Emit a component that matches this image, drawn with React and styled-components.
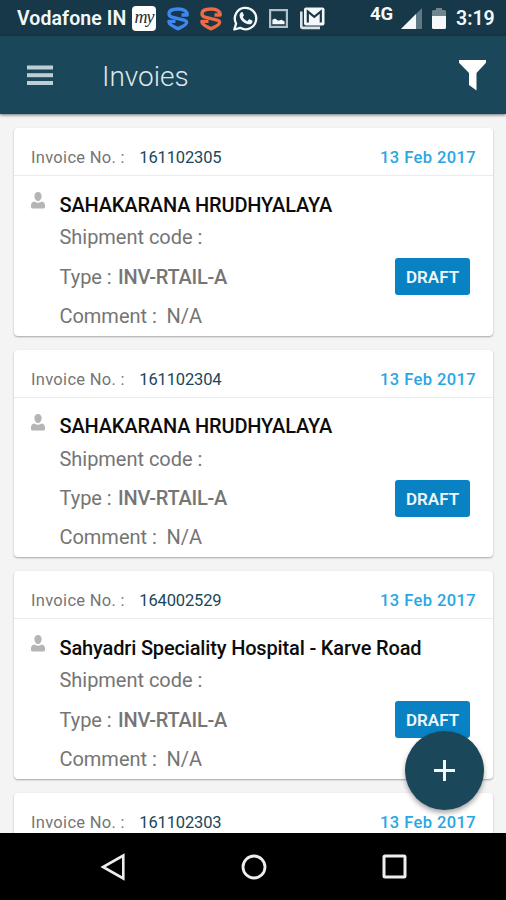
import React from 'react'
import styled, { createGlobalStyle } from 'styled-components'

const GlobalStyle = createGlobalStyle`
  * {
    box-sizing: border-box;
  }
  body {
    margin: 0;
    font-family: Roboto, "Liberation Sans", sans-serif;
  }
  svg {
    display: block;
    flex: none;
  }
`

const Screen = styled.div`
  position: relative;
  width: 506px;
  height: 900px;
  display: flex;
  flex-direction: column;
  overflow: hidden;
  background-color: #f4f4f4;
`

const StatusBar = styled.div`
  flex: none;
  height: 36px;
  display: flex;
  align-items: center;
  justify-content: space-between;
  padding: 0 11px 0 17px;
  background-color: #163848;
  color: #f4f8fa;
  white-space: nowrap;
`
const StatusGroup = styled.div`
  display: flex;
  align-items: center;
  gap: ${({ $gap }) => $gap};
`
const Carrier = styled.span`
  width: 110px;
  margin-right: -6px;
  font-size: 19.5px;
  line-height: 24px;
  font-weight: 600;
  letter-spacing: 0.1px;
  padding-top: 2px;
`
const MyBadge = styled.span`
  width: 24px;
  height: 25px;
  border-radius: 4px;
  background-color: white;
  color: #1c2b33;
  font-family: "Liberation Serif", serif;
  font-size: 18px;
  font-style: italic;
  line-height: 22px;
  letter-spacing: -1px;
  text-align: center;
`
const Network = styled.span`
  width: 24px;
  margin-right: -3px;
  padding-bottom: 8px;
  font-size: 18.5px;
  line-height: 20px;
  font-weight: 700;
`
const Clock = styled.span`
  width: 39px;
  padding-top: 2px;
  font-size: 19.5px;
  line-height: 24px;
  font-weight: 600;
`

const Toolbar = styled.header`
  position: relative;
  flex: none;
  height: 78px;
  display: flex;
  align-items: center;
  padding: 0 20px 0 27px;
  background-color: #1a4759;
  box-shadow: 0 1px 3px rgba(0, 0, 0, 0.55);
  color: #dfe7eb;
`
const Title = styled.h1`
  flex: 1;
  margin: 4px 0 0 49px;
  font-size: 28px;
  line-height: 34px;
  font-weight: 300;
`

const List = styled.main`
  flex: 1;
  min-height: 0;
  overflow: hidden;
  display: flex;
  flex-direction: column;
  gap: 14px;
  padding: 14px 13px 0 14px;
`
const Card = styled.article`
  flex: none;
  height: 207.5px;
  border-radius: 4px;
  background-color: white;
  box-shadow: 0 1px 2px rgba(0, 0, 0, 0.32);
  color: #757575;
`
const CardHeader = styled.div`
  height: 48px;
  display: flex;
  align-items: center;
  padding: 13.5px 17px 0;
  border-bottom: 1px solid #ebebeb;
  font-size: 16.5px;
  line-height: 20px;
`
const InvoiceLabel = styled.span`
  width: 108.3px;
  letter-spacing: 0.3px;
`
const InvoiceNo = styled.span`
  flex: 1;
  color: #1a4759;
  letter-spacing: -0.15px;
`
const InvoiceDate = styled.span`
  color: #29a6e3;
  font-weight: 500;
  letter-spacing: 0.4px;
`
const CardBody = styled.div`
  display: flex;
  padding: 16px 23px 0 17px;
`
const Details = styled.div`
  flex: 1;
  margin-left: 14.5px;
  padding-top: 0.7px;
`
const Customer = styled.h2`
  height: 25px;
  margin: 0;
  color: #0c0c0c;
  font-size: 20px;
  line-height: 25px;
  font-weight: 500;
  letter-spacing: -0.16px;
  white-space: nowrap;
`
const Line = styled.div`
  height: 39.3px;
  display: flex;
  align-items: center;
  justify-content: space-between;
  font-size: 20px;
  line-height: 24px;
  letter-spacing: -0.03px;
  white-space: pre;
`
const Strong = styled.b`
  margin-left: 1.5px;
  font-weight: 500;
  letter-spacing: -0.25px;
`
const DraftButton = styled.button`
  width: 75px;
  height: 37px;
  padding: 1px 0 0;
  border: none;
  border-radius: 3px;
  background-color: #0882c3;
  color: #eef7fc;
  font-family: inherit;
  font-size: 17px;
  font-weight: 600;
`

const Fab = styled.button`
  position: absolute;
  right: 22px;
  bottom: 90px;
  width: 79px;
  height: 79px;
  padding: 0;
  display: flex;
  align-items: center;
  justify-content: center;
  border: none;
  border-radius: 50%;
  background-color: #1a4759;
  box-shadow: 0 3px 5px rgba(0, 0, 0, 0.35);
`

const NavBar = styled.nav`
  flex: none;
  height: 67px;
  display: flex;
  align-items: center;
  justify-content: space-between;
  padding: 0 99px 0 100px;
  background-color: black;
`

const ShieldS = ({ color }) => (
  <svg width="22" height="25" viewBox="0 0 22 25" fill="none" stroke={color} strokeWidth="3.4" strokeLinejoin="round">
    <path d="M14.5 9H20.2C20 4.6 16 3 11 3C6 3 2 4.6 2 7.6C2 9.6 3 10.7 5 11.2L17 14.2C20 15 20.4 16.4 18.6 18.4C16.6 20.4 13.8 21.4 11 22.8C8.2 21.4 5.4 20.4 3.4 18.4C2.4 17.4 2 16.6 1.9 15.4H8.5" />
  </svg>
)

const WhatsApp = () => (
  <svg width="25" height="25" viewBox="0 0 25 25">
    <path d="M1.3 23.5L3.1 17.6A10.7 10.7 0 1 1 7.2 21.8Z" fill="none" stroke="#f4f8fa" strokeWidth="2.3" strokeLinejoin="round" />
    <path
      d="M8.1 6.4C8.6 5.9 9.5 6 9.8 6.6L10.8 9C11 9.5 10.8 9.9 9.8 11C10.9 13.1 12.3 14.3 14.4 15.2L15.8 13.6C16.1 13.2 16.5 13.2 16.9 13.4L19.2 14.6C19.7 14.9 19.5 17 18.4 17.8C15.6 19.8 7.1 15.8 6.6 9.7C6.5 8.2 7.3 7 8.1 6.4Z"
      fill="#f4f8fa"
    />
  </svg>
)

const Picture = () => (
  <svg width="19" height="19" viewBox="0 0 19 19">
    <rect x="1.1" y="1.1" width="16.8" height="16.8" fill="none" stroke="#b4c0c6" strokeWidth="2.2" />
    <path d="M3.4 15.2V10.8L6 9.6L9.2 11.8L12.5 10.8L15.6 12.5V15.2Z" fill="#f4f8fa" />
  </svg>
)

const Gmail = () => (
  <svg width="26" height="23" viewBox="0 0 26 23">
    <path d="M2.3 4.5V19.5Q2.3 20.9 3.8 20.9H21" fill="none" stroke="#dbe3e6" strokeWidth="2.6" />
    <rect x="5" y="0.5" width="20.5" height="18" rx="2" fill="#f4f8fa" />
    <path d="M8.8 15.5V4.5L15.3 9.8L21.8 4.5V15.5" fill="none" stroke="#163848" strokeWidth="2.2" />
  </svg>
)

const Signal = () => (
  <svg width="21" height="21" viewBox="0 0 21 21">
    <path d="M21 0V21H0Z" fill="#607985" />
    <path d="M15 6V21H0Z" fill="#f4f8fa" />
  </svg>
)

const Battery = () => (
  <svg width="14" height="21" viewBox="0 0 14 21">
    <path d="M4 0H10V2H12.5Q14 2 14 3.5V8H0V3.5Q0 2 1.5 2H4Z" fill="#71858f" />
    <path d="M0 8H14V19.5Q14 21 12.5 21H1.5Q0 21 0 19.5Z" fill="#f4f8fa" />
  </svg>
)

const Menu = () => (
  <svg width="26" height="21" viewBox="0 0 26 21" fill="#bfcdd4">
    <rect y="0.5" width="26" height="4" />
    <rect y="8.2" width="26" height="4" />
    <rect y="16" width="26" height="4" />
  </svg>
)

const Filter = () => (
  <svg width="27" height="31" viewBox="0 0 27 31">
    <path d="M0 0H27V2.8L17.5 13V30.5L10 25V13L0 2.8Z" fill="white" />
  </svg>
)

const Person = () => (
  <svg width="14" height="17" viewBox="0 0 14 17" fill="#b5b5b5">
    <path d="M7 0C9.4 0 10.6 1.8 10.6 4.2C10.6 6.7 9 9 7 9C5 9 3.4 6.7 3.4 4.2C3.4 1.8 4.6 0 7 0Z" />
    <path d="M3.5 9.4Q7 12 10.5 9.4C13 9.8 14 11.3 14 13.5V15Q14 16.5 12.5 16.5H1.5Q0 16.5 0 15V13.5C0 11.3 1 9.8 3.5 9.4Z" />
  </svg>
)

const invoices = [
  { no: '161102305', customer: 'SAHAKARANA HRUDHYALAYA' },
  { no: '161102304', customer: 'SAHAKARANA HRUDHYALAYA' },
  { no: '164002529', customer: 'Sahyadri Speciality Hospital - Karve Road' },
  { no: '161102303' },
]

const Invoice = ({ no, customer }) => (
  <Card>
    <CardHeader>
      <InvoiceLabel>Invoice No. :</InvoiceLabel>
      <InvoiceNo>{no}</InvoiceNo>
      <InvoiceDate>13 Feb 2017</InvoiceDate>
    </CardHeader>
    {customer && (
      <CardBody>
        <Person />
        <Details>
          <Customer>{customer}</Customer>
          <Line>Shipment code :</Line>
          <Line>
            <span>Type : <Strong>INV-RTAIL-A</Strong></span>
            <DraftButton>DRAFT</DraftButton>
          </Line>
          <Line>{'Comment :  N/A'}</Line>
        </Details>
      </CardBody>
    )}
  </Card>
)

const App = () => {
  return (
    <Screen>
      <GlobalStyle />
      <StatusBar>
        <StatusGroup $gap="11px">
          <Carrier>Vodafone IN</Carrier>
          <MyBadge>my</MyBadge>
          <ShieldS color="#3f86ee" />
          <ShieldS color="#ee6b43" />
          <WhatsApp />
          <Picture />
          <Gmail />
        </StatusGroup>
        <StatusGroup $gap="10px">
          <Network>4G</Network>
          <Signal />
          <Battery />
          <Clock>3:19</Clock>
        </StatusGroup>
      </StatusBar>
      <Toolbar>
        <Menu />
        <Title>Invoies</Title>
        <Filter />
      </Toolbar>
      <List>
        {invoices.map((invoice) => (
          <Invoice key={invoice.no} {...invoice} />
        ))}
      </List>
      <NavBar>
        <svg width="25" height="28" viewBox="0 0 25 28">
          <path d="M23.3 2.5V25.5L3 14Z" fill="none" stroke="#eee" strokeWidth="2.6" />
        </svg>
        <svg width="26" height="26" viewBox="0 0 26 26">
          <circle cx="13" cy="13" r="11" fill="none" stroke="#eee" strokeWidth="2.8" />
        </svg>
        <svg width="25" height="25" viewBox="0 0 25 25">
          <rect x="2" y="2" width="21" height="21" rx="1" fill="none" stroke="#eee" strokeWidth="3" />
        </svg>
      </NavBar>
      <Fab aria-label="Add">
        <svg width="21" height="21" viewBox="0 0 21 21">
          <path d="M10.5 0V21M0 10.5H21" stroke="#f4f8fa" strokeWidth="3" />
        </svg>
      </Fab>
    </Screen>
  )
}

export default App
